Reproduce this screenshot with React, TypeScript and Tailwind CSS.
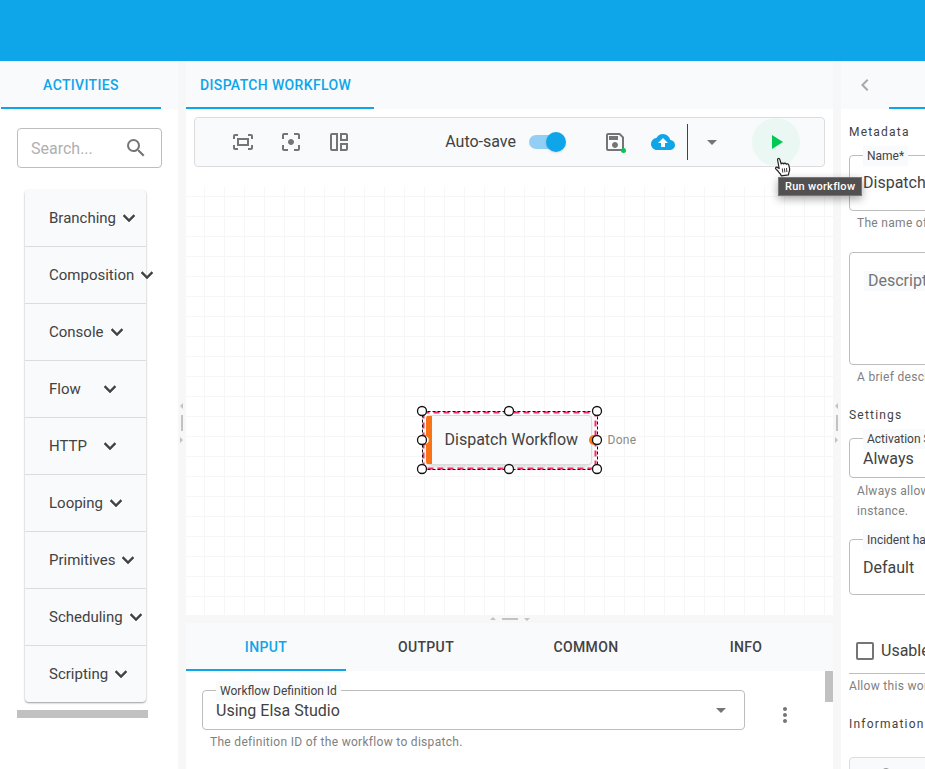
import type { ReactNode } from "react";
import {
  MdArrowDropDown,
  MdBackup,
  MdChevronLeft,
  MdFilterCenterFocus,
  MdInfoOutline,
  MdMoreVert,
  MdOutlineAutoAwesomeMosaic,
  MdOutlineFitScreen,
  MdOutlineSave,
  MdPlayArrow,
  MdSearch,
} from "react-icons/md";

const categories = [
  "Branching",
  "Composition",
  "Console",
  "Flow",
  "HTTP",
  "Looping",
  "Primitives",
  "Scheduling",
  "Scripting",
];

function IconButton({ label, children }: { label: string; children: ReactNode }) {
  return (
    <button
      type="button"
      aria-label={label}
      className="relative flex size-12 shrink-0 items-center justify-center rounded-full text-[#757575]"
    >
      {children}
    </button>
  );
}

function Tab({ label, active = false }: { label: string; active?: boolean }) {
  return (
    <button
      type="button"
      role="tab"
      aria-selected={active}
      className={
        "h-12 min-w-[160px] shrink-0 border-b-2 px-3.5 pt-0.5 text-sm font-medium tracking-wide uppercase " +
        (active ? "border-[#0ea5e9] text-[#0ea5e9]" : "border-transparent text-[#424242]")
      }
    >
      {label}
    </button>
  );
}

function VerticalSplitter() {
  return (
    <div className="flex w-2 shrink-0 flex-col items-center justify-center bg-[#f7f7f7]">
      <svg width="8" height="40" viewBox="0 0 8 40" className="mt-4" fill="#c2c2c2">
        <path d="M5 0v6L2 3zM3 12h2v16H3zM2 34v6l3-3z" />
      </svg>
    </div>
  );
}

function HorizontalSplitter() {
  return (
    <div className="flex h-2 shrink-0 items-center justify-center bg-[#f7f7f7]">
      <svg width="40" height="8" viewBox="0 0 40 8" fill="#c2c2c2">
        <path d="M0 5h6L3 2zM12 3h16v2H12zM34 3h6l-3 3z" />
      </svg>
    </div>
  );
}

const outline = "relative rounded border border-[#bdbdbd]";
const floating = "absolute -top-2.5 left-[13px] bg-[#f8fafc] px-1 text-xs leading-5 whitespace-nowrap text-[#424242]";
const helper = "px-2 text-xs leading-5 text-[#808080] tracking-wide";

function ActivitiesPanel() {
  return (
    <aside className="flex w-[178px] shrink-0 flex-col bg-white">
      <div role="tablist" className="flex bg-[#f8fafc] pl-px">
        <Tab label="Activities" active />
      </div>
      <div className="px-[17px] pt-[19px]">
        <div className="flex h-10 w-[145px] items-center rounded border border-[#bdbdbd] pr-[13px] pl-[13px]">
          <input
            type="text"
            aria-label="Search activities"
            placeholder="Search..."
            className="min-w-0 flex-1 pt-0.5 text-base outline-none placeholder:text-[#b0b0b0]"
          />
          <MdSearch className="size-6 shrink-0 text-[#757575]" />
        </div>
        <ul className="mx-2 mt-[22px] w-[121px] rounded bg-[#f8fafc] shadow-[0_1px_2px_rgba(0,0,0,0.4)]">
          {categories.map((name) => (
            <li key={name} className="border-b border-[#dcdcdc] last:border-b-0">
              <button type="button" className="flex h-14 items-center gap-px pl-6 text-[15px]">
                <span className="min-w-12 text-left">{name}</span>
                <svg viewBox="0 0 24 24" className="size-6 shrink-0" fill="currentColor" stroke="currentColor" strokeWidth="0.5">
                  <path d="M16.590 8.590 12 13.170 7.410 8.590 6 10l6 6 6-6z" />
                </svg>
              </button>
            </li>
          ))}
        </ul>
        <div className="mt-2 h-2 w-[131px] bg-[#c1c1c1]" />
      </div>
    </aside>
  );
}

function Toolbar() {
  return (
    <div
      role="toolbar"
      className="mx-2 mt-2 flex h-[50px] shrink-0 items-center rounded border border-[#dcdcdc] bg-[#f8fafc] px-6"
    >
      <IconButton label="Zoom to fit">
        <MdOutlineFitScreen className="size-6" />
      </IconButton>
      <IconButton label="Center">
        <MdFilterCenterFocus className="size-6" />
      </IconButton>
      <IconButton label="Auto layout">
        <MdOutlineAutoAwesomeMosaic className="size-6" />
      </IconButton>
      <label className="mr-[25px] ml-auto flex items-center gap-[13px]">
        Auto-save
        <span className="relative flex h-5 w-[37px] items-center">
          <input
            type="checkbox"
            defaultChecked
            className="h-3.5 w-[34px] appearance-none rounded-full bg-[#93cff4]"
          />
          <span className="pointer-events-none absolute top-0 right-0 size-5 rounded-full bg-[#0ea5e9] shadow-sm" />
        </span>
      </label>
      <IconButton label="Save">
        <MdOutlineSave className="size-6" />
        <span className="absolute right-[13px] bottom-[13px] size-[5px] rounded-full bg-[#00c853]" />
      </IconButton>
      <IconButton label="Publish">
        <MdBackup className="size-6 text-[#0ea5e9]" />
      </IconButton>
      <div className="h-9 w-px bg-[#424242]" />
      <IconButton label="More publish options">
        <MdArrowDropDown className="size-6" />
      </IconButton>
      <div className="relative ml-4">
        <button
          type="button"
          aria-label="Run"
          className="flex size-12 items-center justify-center rounded-full bg-[#ebf7f3] text-[#00c853]"
        >
          <MdPlayArrow className="size-6" />
        </button>
        <svg width="18" height="20" viewBox="0 0 18 20" className="absolute top-[39px] left-[22px] z-20">
          <path
            d="M5.2 11.5 3.6 3C3.3 1.200 5.400.9 5.900 2.600L7.200 7c.4-1.300 2-1.300 2.500 0 .5-1.200 2.200-1 2.600.300.8-1 2.300-.5 2.500.8l.8 3.500c.3 2-.4 3.200-.8 4.300l-.3 2-7.300.9-.7-1.800c-1.200-1-2.400-3.200-4.200-4.500C.6 11 2 9.600 3.500 10.400z"
            fill="#fff"
            stroke="#222"
            strokeWidth="1.200"
            strokeLinejoin="round"
          />
          <path d="m8.300 11.500.5 4M10.400 11.300l.5 4M12.500 11l.4 4" stroke="#222" strokeWidth=".9" />
        </svg>
        <div
          role="tooltip"
          className="absolute top-[59px] left-[26px] z-10 border border-[#777] bg-[#525050] px-1.5 text-[11px] leading-[17px] font-medium tracking-wide whitespace-nowrap text-white shadow-[0_3px_8px_rgba(0,0,0,0.35)]"
        >
          Run workflow
        </div>
      </div>
    </div>
  );
}

function ActivityNode() {
  const handles = [
    [4, 4],
    [91, 4],
    [179, 4],
    [4, 33],
    [179, 33],
    [4, 62],
    [91, 62],
    [179, 62],
  ];
  return (
    <div className="absolute top-[220px] left-1/2 h-[68px] w-[184px] -translate-x-1/2">
      <div className="absolute top-2 right-2.5 bottom-2.5 left-2 flex items-center rounded border border-[#dcdcdc] border-l-[#f97316] bg-[#f8fafc] shadow-md">
        <span className="h-full w-[5px] shrink-0 bg-[#f97316]" />
        <span className="flex-1 pl-[13px] whitespace-nowrap">Dispatch Workflow</span>
      </div>
      <svg className="absolute inset-0 overflow-visible" width="184" height="68" viewBox="0 0 184 68" fill="none">
        <circle cx="7" cy="33" r="4.500" fill="#fff" stroke="#f97316" strokeWidth="1.500" />
        <circle cx="176" cy="33" r="5" fill="#f97316" />
        <rect x="5.500" y="5.500" width="172" height="56" stroke="#f5286e" strokeWidth="2" strokeDasharray="6 4" />
        <rect x="4.500" y="4.500" width="175" height="58" stroke="#111" strokeDasharray="3 2" />
        {handles.map(([x, y]) => (
          <circle key={x + "-" + y} cx={x} cy={y} r="4.500" fill="#fff" stroke="#111" strokeWidth="1.300" />
        ))}
      </svg>
      <span className="absolute top-[23px] left-[190px] text-xs leading-5 tracking-wide text-[#8a8a8a]">Done</span>
    </div>
  );
}

function InputPanel() {
  return (
    <section className="flex h-[146px] shrink-0 flex-col bg-white">
      <div role="tablist" className="flex bg-[#f8fafc]">
        <Tab label="Input" active />
        <Tab label="Output" />
        <Tab label="Common" />
        <Tab label="Info" />
      </div>
      <div className="flex flex-1 items-start">
        <div className="flex flex-1 gap-4 px-4 pt-[19px]">
          <div className="flex-1">
            <div className={outline}>
              <label htmlFor="definition" className={floating}>
                Workflow Definition Id
              </label>
              <select id="definition" className="h-[38px] w-full appearance-none px-[13px] pt-0.5 outline-none">
                <option>Using Elsa Studio</option>
              </select>
              <MdArrowDropDown className="pointer-events-none absolute top-[7px] right-[11px] size-6 text-[#757575]" />
            </div>
            <p className={helper + " mt-0.5"}>The definition ID of the workflow to dispatch.</p>
          </div>
          <div className="pt-px">
            <IconButton label="Options">
              <MdMoreVert className="size-6" />
            </IconButton>
          </div>
        </div>
        <div className="h-[31px] w-2 bg-[#c1c1c1]" />
      </div>
    </section>
  );
}

function Designer() {
  return (
    <main className="flex min-w-0 flex-1 flex-col bg-white">
      <div role="tablist" className="flex shrink-0 bg-[#f8fafc]">
        <div className="flex w-[188px] *:flex-1 *:text-left">
          <Tab label="Dispatch Workflow" active />
        </div>
      </div>
      <Toolbar />
      <div className="relative mt-5 min-h-0 flex-1 bg-[linear-gradient(to_right,#f6f6f6_1px,transparent_1px),linear-gradient(to_bottom,#f6f6f6_1px,transparent_1px)] bg-size-[20px_20px] bg-position-[18px_9px]">
        <ActivityNode />
      </div>
      <HorizontalSplitter />
      <InputPanel />
    </main>
  );
}

function PropertiesPanel() {
  return (
    <aside className="w-[84px] shrink-0 overflow-hidden bg-white">
      <div className="w-80">
        <div className="flex h-12 bg-[#f8fafc]">
          <button type="button" aria-label="Previous tabs" className="flex w-12 items-center justify-center text-[#a8a8a8]">
            <MdChevronLeft className="size-6" />
          </button>
          <div className="flex-1 border-b-2 border-[#0ea5e9]" />
        </div>
        <div className="px-2 pt-[13px]">
          <h2 className="text-xs leading-5 tracking-widest">Metadata</h2>
          <div className={outline + " mt-[13px]"}>
            <label htmlFor="name" className={floating}>
              Name*
            </label>
            <input id="name" defaultValue="Dispatch Workflow" className="h-[54px] w-full px-[13px] pb-0.5 outline-none" />
          </div>
          <p className={helper + " mt-0.5"}>The name of the workflow.</p>
          <div className={outline + " mt-[19px]"}>
            <label htmlFor="description" className="absolute top-[18px] left-3.5 bg-[#f8fafc] px-1 leading-5 text-[#757575]">
              Description
            </label>
            <textarea id="description" className="block h-[111px] w-full resize-none px-[13px] outline-none" />
          </div>
          <p className={helper + " mt-0.5"}>A brief description of the workflow.</p>
          <h2 className="mt-[18px] text-xs leading-5 tracking-widest">Settings</h2>
          <div className={outline + " mt-[13px]"}>
            <label htmlFor="activation" className={floating}>
              Activation Strategy
            </label>
            <select id="activation" className="h-[38px] w-full appearance-none px-[13px] pt-0.5 outline-none">
              <option>Always</option>
            </select>
          </div>
          <p className={helper + " mt-[3px]"}>
            Always allow the creation of a new workflow
            <br />
            instance.
          </p>
          <div className={outline + " mt-[18px]"}>
            <label htmlFor="incident" className={floating}>
              Incident handling strategy
            </label>
            <select id="incident" className="h-[54px] w-full appearance-none px-[13px] pt-0.5 outline-none">
              <option>Default</option>
            </select>
          </div>
          <label className="mt-8 flex h-[47px] items-center gap-[7px] border-b border-[#bdbdbd] pt-0.5 pl-[7px]">
            <input type="checkbox" className="size-[18px] appearance-none rounded-xs border-2 border-[#757575]" />
            Usable as activity
          </label>
          <p className="mt-0.5 text-xs leading-5 tracking-wide text-[#808080]">Allow this workflow to be used as an activity.</p>
          <h2 className="mt-[18px] text-xs leading-5 tracking-widest">Information</h2>
          <div className="mt-[23px] h-20 rounded border border-[#dcdcdc] bg-[#f8fafc] px-7 pt-[9px]">
            <MdInfoOutline className="size-4 text-[#757575]" />
          </div>
        </div>
      </div>
    </aside>
  );
}

export default function App() {
  return (
    <div className="flex h-screen flex-col overflow-hidden font-[Roboto,sans-serif] text-base text-[#424242]">
      <header className="h-[61px] shrink-0 bg-[#0ea5e9]" />
      <div className="flex min-h-0 flex-1">
        <ActivitiesPanel />
        <VerticalSplitter />
        <Designer />
        <VerticalSplitter />
        <PropertiesPanel />
      </div>
    </div>
  );
}
